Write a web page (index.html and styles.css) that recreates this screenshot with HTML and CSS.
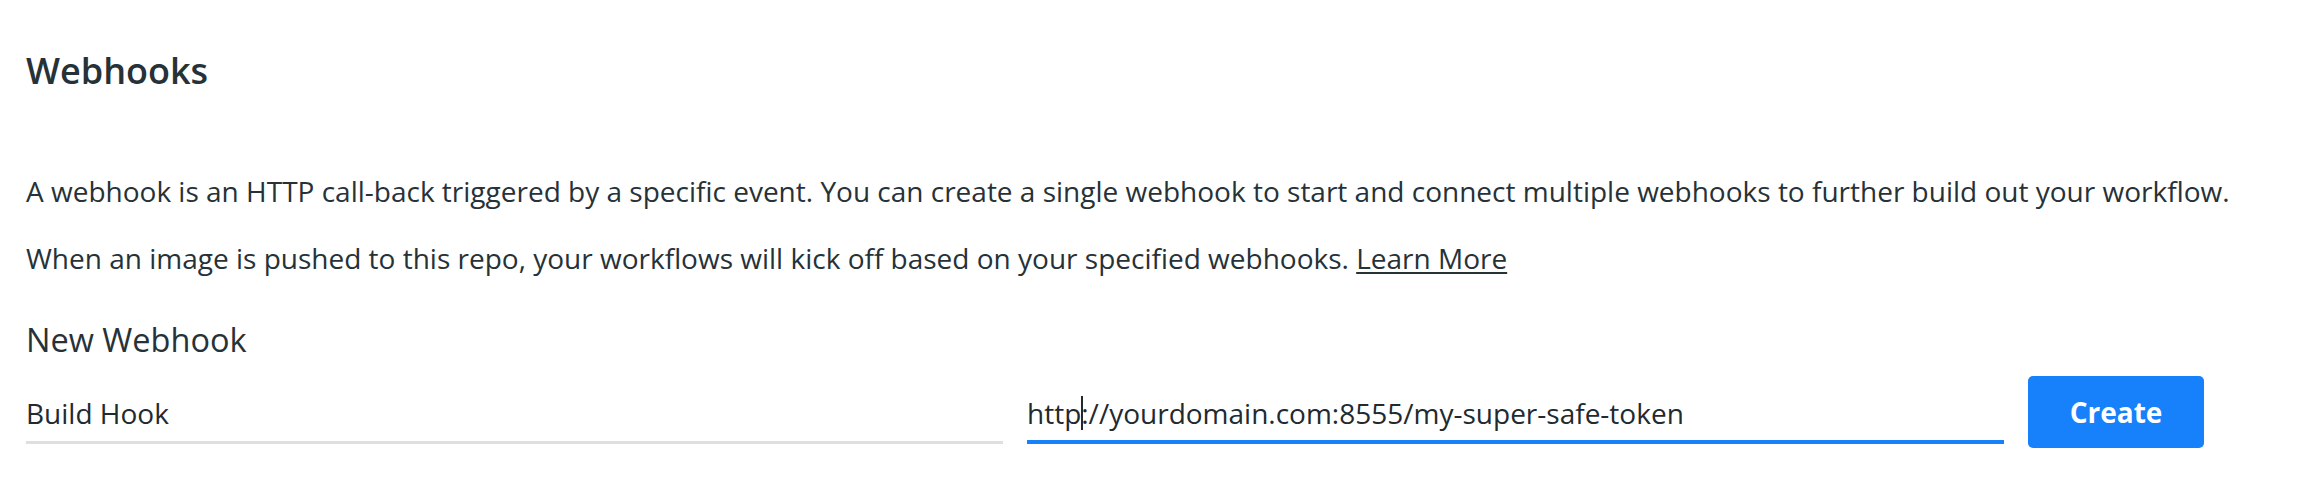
FILE: index.html
```html
<!DOCTYPE html>
<html lang="en">
<head>
<meta charset="utf-8">
<title>Webhooks</title>
<link rel="stylesheet" href="styles.css">
</head>
<body>
<main class="page">
  <h2 class="title">Webhooks</h2>
  <p class="text">A webhook is an HTTP call-back triggered by a specific event. You can create a single webhook to start and connect multiple webhooks to further build out your workflow.</p>
  <p class="text text-second">When an image is pushed to this repo, your workflows will kick off based on your specified webhooks. <a class="link" href="#">Learn More</a></p>
  <h3 class="subtitle">New Webhook</h3>
  <div class="form-row">
    <div class="field">Build Hook</div>
    <div class="field field-focused">http<span class="caret"></span>://yourdomain.com:8555/my-super-safe-token</div>
    <button class="button" type="button">Create</button>
  </div>
</main>
</body>
</html>
```
FILE: styles.css
```css
html, body {
  margin: 0;
  padding: 0;
  background: #ffffff;
}

body {
  font-family: "Open Sans", "Liberation Sans", sans-serif;
  color: #263238;
}

.page {
  padding: 47px 0 0 26px;
}

.title {
  margin: 0;
  font-size: 36px;
  font-weight: 600;
  line-height: 48px;
  color: #263238;
}

.text {
  margin: 76px 0 0 0;
  font-size: 28px;
  line-height: 40px;
  font-weight: 400;
  color: #263238;
}

.text-second {
  margin-top: 27px;
}

.link {
  color: #263238;
  text-decoration: underline;
  text-underline-offset: 3px;
  text-decoration-thickness: 2px;
}

.subtitle {
  margin: 40px 0 0 0;
  font-size: 32.5px;
  line-height: 44px;
  font-weight: 400;
  color: #263238;
}

.form-row {
  display: flex;
  align-items: flex-start;
  gap: 24px;
  width: 2178px;
  margin-top: 14px;
}

.field {
  flex: 1;
  font-size: 28px;
  line-height: 38px;
  color: #222a30;
  padding: 18px 0 9px 0;
  border-bottom: 3px solid #dfdfdf;
  white-space: nowrap;
}

.field-focused {
  padding-bottom: 8px;
  border-bottom: 4px solid #1780fb;
}

.caret {
  display: inline-block;
  width: 2px;
  height: 34px;
  margin-right: -2px;
  vertical-align: -6px;
  background: #222a30;
}

.button {
  flex: 0 0 176px;
  height: 72px;
  border: 0;
  border-radius: 5px;
  background: #1780fb;
  color: #ffffff;
  font-family: "Open Sans", "Liberation Sans", sans-serif;
  font-size: 28px;
  font-weight: 700;
  cursor: pointer;
}
```
